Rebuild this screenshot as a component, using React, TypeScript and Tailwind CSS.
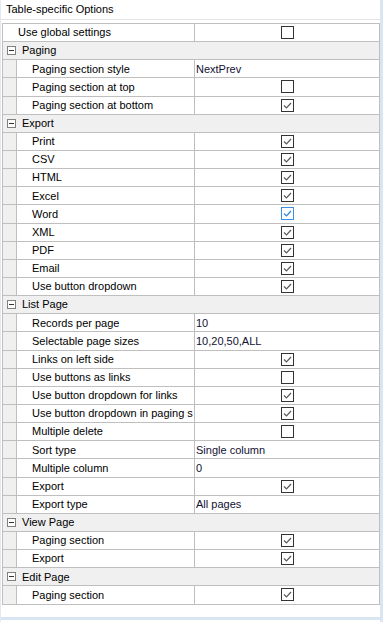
import React from "react";

type Row =
  | { kind: "group"; label: string }
  | { kind: "prop"; label: string; value?: string; check?: "on" | "off" | "focus"; top?: boolean };

const rows: Row[] = [
  { kind: "prop", label: "Use global settings", check: "off", top: true },
  { kind: "group", label: "Paging" },
  { kind: "prop", label: "Paging section style", value: "NextPrev" },
  { kind: "prop", label: "Paging section at top", check: "off" },
  { kind: "prop", label: "Paging section at bottom", check: "on" },
  { kind: "group", label: "Export" },
  { kind: "prop", label: "Print", check: "on" },
  { kind: "prop", label: "CSV", check: "on" },
  { kind: "prop", label: "HTML", check: "on" },
  { kind: "prop", label: "Excel", check: "on" },
  { kind: "prop", label: "Word", check: "focus" },
  { kind: "prop", label: "XML", check: "on" },
  { kind: "prop", label: "PDF", check: "on" },
  { kind: "prop", label: "Email", check: "on" },
  { kind: "prop", label: "Use button dropdown", check: "on" },
  { kind: "group", label: "List Page" },
  { kind: "prop", label: "Records per page", value: "10" },
  { kind: "prop", label: "Selectable page sizes", value: "10,20,50,ALL" },
  { kind: "prop", label: "Links on left side", check: "on" },
  { kind: "prop", label: "Use buttons as links", check: "off" },
  { kind: "prop", label: "Use button dropdown for links", check: "on" },
  { kind: "prop", label: "Use button dropdown in paging s", check: "on" },
  { kind: "prop", label: "Multiple delete", check: "off" },
  { kind: "prop", label: "Sort type", value: "Single column" },
  { kind: "prop", label: "Multiple column", value: "0" },
  { kind: "prop", label: "Export", check: "on" },
  { kind: "prop", label: "Export type", value: "All pages" },
  { kind: "group", label: "View Page" },
  { kind: "prop", label: "Paging section", check: "on" },
  { kind: "prop", label: "Export", check: "on" },
  { kind: "group", label: "Edit Page" },
  { kind: "prop", label: "Paging section", check: "on" },
];

function CheckBox({ state }: { state: "on" | "off" | "focus" }) {
  const focus = state === "focus";
  return (
    <span
      className={`relative block h-[13px] w-[13px] border bg-white ${
        focus ? "border-[#3d8ee4]" : "border-[#333333]"
      }`}
    >
      {state !== "off" && (
        <svg width="11" height="11" viewBox="0 0 11 11" className="absolute left-0 top-0">
          <polyline
            points="2,5.5 4.5,8 9,3"
            fill="none"
            stroke={focus ? "#2f84e0" : "#5a5a5a"}
            strokeWidth="1.2"
          />
        </svg>
      )}
    </span>
  );
}

function Expander() {
  return (
    <span className="relative block h-[9px] w-[9px] border border-[#808080] bg-white">
      <span className="absolute left-[1px] top-[3px] h-[1px] w-[5px] bg-[#333333]" />
    </span>
  );
}

export default function App() {
  return (
    <div
      className="flex h-[622px] w-[385px] bg-white text-[11px] text-black"
      style={{ fontFamily: '"Liberation Sans", Arial, sans-serif' }}
    >
      <div className="flex w-[380px] shrink-0 flex-col border-l border-[#e2e9f2]">
        <div className="flex h-[20px] shrink-0 items-center border-b border-[#e3e3e3] pl-[5px]">
          Table-specific Options
        </div>
        <div className="ml-[1px] mt-[3px] w-[378px] border-x border-t border-[#bfbfbf]">
          {rows.map((row, i) =>
            row.kind === "group" ? (
              <div
                key={i}
                className="flex h-[18.15px] items-center border-b border-[#bfbfbf] bg-[#f0f0f0]"
              >
                <span className="ml-[4px] mr-[6px]">
                  <Expander />
                </span>
                <span>{row.label}</span>
              </div>
            ) : (
              <div key={i} className="flex h-[18.15px] border-b border-[#bfbfbf]">
                {!row.top && <div className="w-[13px] shrink-0 bg-[#f0f0f0]" />}
                <div
                  className={`flex min-w-0 flex-1 items-center overflow-hidden whitespace-nowrap border-r border-[#bfbfbf] pl-[15px] ${
                    row.top ? "" : "border-l"
                  }`}
                >
                  {row.label}
                </div>
                <div className="flex w-[184px] shrink-0 items-center whitespace-nowrap pl-[1px]">
                  {row.check ? (
                    <span className="mx-auto">
                      <CheckBox state={row.check} />
                    </span>
                  ) : (
                    <span className="text-[#111133]">{row.value}</span>
                  )}
                </div>
              </div>
            )
          )}
        </div>
        <div className="flex-1" />
        <div className="h-[3px] shrink-0 bg-[#dbe5f1]" />
        <div className="h-[2px] shrink-0" />
      </div>
      <div className="w-[3px] shrink-0 bg-[#dbe5f1]" />
    </div>
  );
}
